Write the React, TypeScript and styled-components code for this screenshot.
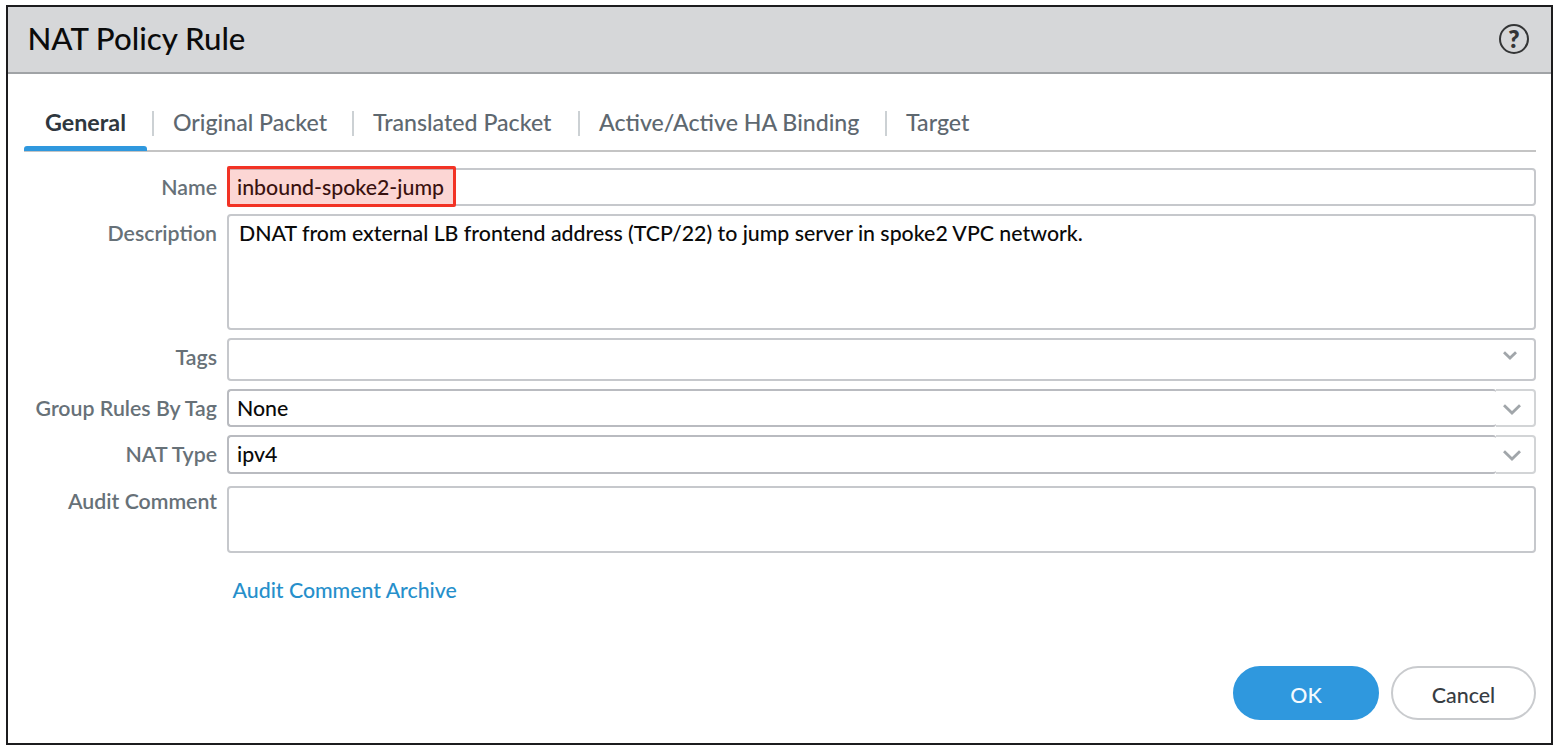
import React from "react";
import styled, { createGlobalStyle } from "styled-components";

const GlobalStyle = createGlobalStyle`
  *, *::before, *::after { box-sizing: border-box; }
  body { margin: 0; background: #fff; font-family: Lato, "Liberation Sans", sans-serif; }
`;

const Page = styled.main`
  width: 1564px;
  height: 754px;
  padding: 5px 11px 9px 6px;
`;

const Dialog = styled.section`
  display: flex;
  flex-direction: column;
  width: 100%;
  height: 740px;
  border: 2px solid #1c1c1e;
  background: #fff;
`;

const Header = styled.header`
  display: flex;
  align-items: center;
  justify-content: space-between;
  height: 67px;
  padding: 0 22px 2px 19.5px;
  background: #d6d7d9;
  border-bottom: 2px solid #a0a3a6;
`;

const Title = styled.h1`
  margin: 0;
  padding-bottom: 1px;
  font-size: 31.2px;
  font-weight: 500;
  line-height: 40px;
  color: #0b0b0b;
`;

const HelpButton = styled.div`
  display: flex;
  align-items: center;
  justify-content: center;
  width: 30px;
  height: 30px;
  border: 2px solid #343536;
  border-radius: 50%;
  font-size: 24px;
  font-weight: 800;
  line-height: 26px;
  color: #343536;
`;

const Tabs = styled.nav`
  display: flex;
  height: 78px;
  margin: 0 15px 0 16px;
  padding-top: 28px;
  border-bottom: 2px solid #c4c4c4;
`;

const Tab = styled.div<{ $width: number; $active?: boolean }>`
  position: relative;
  flex: none;
  width: ${(p) => p.$width}px;
  height: 48px;
  padding-left: 21px;
  font-size: ${(p) => (p.$active ? 23.3 : 23.15)}px;
  line-height: 40px;
  white-space: nowrap;
  font-weight: ${(p) => (p.$active ? 700 : 500)};
  color: ${(p) => (p.$active ? "#2f373e" : "#5e6870")};

  &:not(:first-child)::before {
    content: "";
    position: absolute;
    left: 0;
    top: 9px;
    width: 2px;
    height: 25px;
    background: #ccd1d4;
  }
`;

const ActiveBar = styled.span`
  position: absolute;
  left: 0;
  bottom: -1px;
  width: 123px;
  height: 5px;
  border-radius: 3px 3px 0 0;
  background: #2f98de;
`;

const Form = styled.div`
  display: flex;
  flex-direction: column;
  padding: 16px 15px 0 16px;
`;

const Row = styled.div<{ $height: number; $gap: number }>`
  display: grid;
  grid-template-columns: 193px 1fr;
  column-gap: 10px;
  height: ${(p) => p.$height}px;
  margin-bottom: ${(p) => p.$gap}px;
`;

const Label = styled.div<{ $offset: number }>`
  padding-top: ${(p) => p.$offset}px;
  text-align: right;
  font-size: 21.3px;
  font-weight: 600;
  line-height: 28px;
  white-space: nowrap;
  color: #677178;
`;

const Field = styled.div<{ $offset?: number; $inset?: number }>`
  position: relative;
  padding: ${(p) => p.$offset ?? 0}px 0 0 ${(p) => p.$inset ?? 8}px;
  border: 2px solid #c6c8cc;
  border-radius: 4px;
  font-size: 21.32px;
  font-weight: 500;
  line-height: 28px;
  color: #0a0a0a;
`;

const Highlight = styled.span`
  position: absolute;
  left: -2px;
  top: -4px;
  width: 229px;
  height: 41px;
  border: 3px solid #f23325;
  border-radius: 2px;
  background: rgba(238, 48, 40, 0.2);
`;

const Select = styled.div`
  display: flex;
`;

const SelectValue = styled.div`
  flex: 1;
  padding: 3px 0 0 8px;
  border: 2px solid #b9bbc0;
  border-right: 0;
  border-radius: 4px 3px 3px 4px;
  font-size: 21.32px;
  font-weight: 500;
  line-height: 28px;
  color: #0a0a0a;
`;

const SelectTrigger = styled.div`
  width: 40px;
  padding: 13px 0 0 7px;
  border: 2px solid #d2d4d6;
  border-left: 0;
  border-radius: 0 4px 4px 0;
`;

const TagsTrigger = styled.div`
  display: flex;
  justify-content: flex-end;
  padding: 11px 17px 0 0;
`;

const Icon = styled.svg`
  display: block;
  fill: none;
  stroke: #a1a6aa;
  stroke-width: 2.8;
`;

const ArchiveLink = styled.a`
  margin: 6px 0 0 208.5px;
  font-size: 21.3px;
  font-weight: 500;
  line-height: 28px;
  color: #268fcb;
`;

const Footer = styled.footer`
  display: flex;
  justify-content: flex-end;
  gap: 12px;
  margin-top: auto;
  padding: 0 15px 23px 0;
`;

const Button = styled.button<{ $primary?: boolean }>`
  width: ${(p) => (p.$primary ? 146 : 145)}px;
  height: 54px;
  padding: 4px 0 0;
  border: 2px solid ${(p) => (p.$primary ? "#2f98de" : "#c9cbce")};
  border-radius: 27px;
  background: ${(p) => (p.$primary ? "#2f98de" : "#fff")};
  font-family: inherit;
  font-size: 21.4px;
  font-weight: 500;
  line-height: 28px;
  color: ${(p) => (p.$primary ? "#f4fafe" : "#373d43")};
`;

const Chevron = () => (
  <Icon width="18" height="11" viewBox="0 0 18 11">
    <path d="M1 1.2 9 9l8-7.8" />
  </Icon>
);

const SmallChevron = () => (
  <Icon width="14" height="9" viewBox="0 0 14 9">
    <path d="M1 1.2 7 7l6-5.8" />
  </Icon>
);

const tabs = [
  { name: "General", width: 128 },
  { name: "Original Packet", width: 200 },
  { name: "Translated Packet", width: 226 },
  { name: "Active/Active HA Binding", width: 307 },
  { name: "Target", width: 110 },
];

export default function App() {
  return (
    <>
      <GlobalStyle />
      <Page>
        <Dialog>
          <Header>
            <Title>NAT Policy Rule</Title>
            <HelpButton>?</HelpButton>
          </Header>
          <Tabs>
            {tabs.map((t, i) => (
              <Tab key={t.name} $width={t.width} $active={i === 0}>
                {t.name}
                {i === 0 && <ActiveBar />}
              </Tab>
            ))}
          </Tabs>
          <Form>
            <Row $height={38} $gap={8}>
              <Label $offset={5}>Name</Label>
              <Field $offset={3}>
                inbound-spoke2-jump
                <Highlight />
              </Field>
            </Row>
            <Row $height={116} $gap={8}>
              <Label $offset={5}>Description</Label>
              <Field $offset={3} $inset={10}>
                DNAT from external LB frontend address (TCP/22) to jump server in spoke2 VPC network.
              </Field>
            </Row>
            <Row $height={43} $gap={8}>
              <Label $offset={5}>Tags</Label>
              <Field>
                <TagsTrigger>
                  <SmallChevron />
                </TagsTrigger>
              </Field>
            </Row>
            <Row $height={38} $gap={8}>
              <Label $offset={5}>Group Rules By Tag</Label>
              <Select>
                <SelectValue>None</SelectValue>
                <SelectTrigger>
                  <Chevron />
                </SelectTrigger>
              </Select>
            </Row>
            <Row $height={39} $gap={12}>
              <Label $offset={5}>NAT Type</Label>
              <Select>
                <SelectValue>ipv4</SelectValue>
                <SelectTrigger>
                  <Chevron />
                </SelectTrigger>
              </Select>
            </Row>
            <Row $height={67} $gap={17}>
              <Label $offset={1}>Audit Comment</Label>
              <Field />
            </Row>
            <ArchiveLink>Audit Comment Archive</ArchiveLink>
          </Form>
          <Footer>
            <Button $primary>OK</Button>
            <Button>Cancel</Button>
          </Footer>
        </Dialog>
      </Page>
    </>
  );
}
